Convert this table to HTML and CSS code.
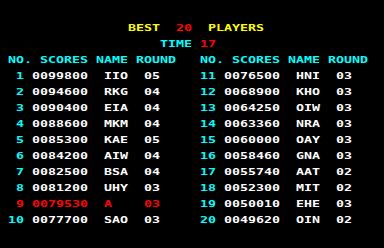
FILE: index.html
```html
<!DOCTYPE html>
<html>
<head>
<meta charset="utf-8">
<link rel="stylesheet" href="styles.css">
</head>
<body>
<main class="screen">
  <div class="line title"><span class="yellow">BEST</span>  <span class="red">20</span>  <span class="yellow">PLAYERS</span></div>
  <div class="line time"><span class="cyan">TIME</span> <span class="red">17</span></div>
  <div class="board">
    <section class="col">
      <div class="line head cyan">NO. SCORES NAME ROUND</div>
      <div class="line row"><span class="no">1</span><span class="score">0099800</span><span class="name">IIO</span><span class="round">05</span></div>
      <div class="line row"><span class="no">2</span><span class="score">0094600</span><span class="name">RKG</span><span class="round">04</span></div>
      <div class="line row"><span class="no">3</span><span class="score">0090400</span><span class="name">EIA</span><span class="round">04</span></div>
      <div class="line row"><span class="no">4</span><span class="score">0088600</span><span class="name">MKM</span><span class="round">04</span></div>
      <div class="line row"><span class="no">5</span><span class="score">0085300</span><span class="name">KAE</span><span class="round">05</span></div>
      <div class="line row"><span class="no">6</span><span class="score">0084200</span><span class="name">AIW</span><span class="round">04</span></div>
      <div class="line row"><span class="no">7</span><span class="score">0082500</span><span class="name">BSA</span><span class="round">04</span></div>
      <div class="line row"><span class="no">8</span><span class="score">0081200</span><span class="name">UHY</span><span class="round">03</span></div>
      <div class="line row current"><span class="no">9</span><span class="score">0079530</span><span class="name">A</span><span class="round">03</span></div>
      <div class="line row"><span class="no">10</span><span class="score">0077700</span><span class="name">SAO</span><span class="round">03</span></div>
    </section>
    <section class="col">
      <div class="line head cyan">NO. SCORES NAME ROUND</div>
      <div class="line row"><span class="no">11</span><span class="score">0076500</span><span class="name">HNI</span><span class="round">03</span></div>
      <div class="line row"><span class="no">12</span><span class="score">0068900</span><span class="name">KHO</span><span class="round">03</span></div>
      <div class="line row"><span class="no">13</span><span class="score">0064250</span><span class="name">OIW</span><span class="round">03</span></div>
      <div class="line row"><span class="no">14</span><span class="score">0063360</span><span class="name">NRA</span><span class="round">03</span></div>
      <div class="line row"><span class="no">15</span><span class="score">0060000</span><span class="name">OAY</span><span class="round">03</span></div>
      <div class="line row"><span class="no">16</span><span class="score">0058460</span><span class="name">GNA</span><span class="round">03</span></div>
      <div class="line row"><span class="no">17</span><span class="score">0055740</span><span class="name">AAT</span><span class="round">02</span></div>
      <div class="line row"><span class="no">18</span><span class="score">0052300</span><span class="name">MIT</span><span class="round">02</span></div>
      <div class="line row"><span class="no">19</span><span class="score">0050010</span><span class="name">EHE</span><span class="round">03</span></div>
      <div class="line row"><span class="no">20</span><span class="score">0049620</span><span class="name">OIN</span><span class="round">02</span></div>
    </section>
  </div>
</main>
</body>
</html>
```
FILE: styles.css
```css
html, body {
  margin: 0;
  padding: 0;
  background: #000;
}
body {
  width: 384px;
  height: 248px;
  overflow: hidden;
}
.screen {
  padding-top: 20px;
  font-family: "DejaVu Sans Mono", "Liberation Mono", monospace;
  font-weight: bold;
  font-size: 13.29px;
  color: #fff;
}
.line {
  height: 16px;
  line-height: 16px;
  white-space: pre;
  transform: scaleY(0.72);
  transform-origin: 50% 50%;
}
.title { padding-left: 128px; }
.time { padding-left: 160px; }
.board {
  display: grid;
  grid-template-columns: 192px 192px;
}
.col {
  padding-left: 8px;
}
.row {
  display: flex;
  color: #fff;
}
.row .no {
  width: 16px;
  text-align: right;
  margin-right: 8px;
  color: #00ffff;
}
.row .score { width: 56px; margin-right: 16px; }
.row .name { width: 24px; margin-right: 16px; }
.row .round { width: 16px; }
.row.current, .row.current .no { color: #ff0000; }
.yellow { color: #ffff00; }
.red { color: #ff0000; }
.cyan { color: #00ffff; }
```
